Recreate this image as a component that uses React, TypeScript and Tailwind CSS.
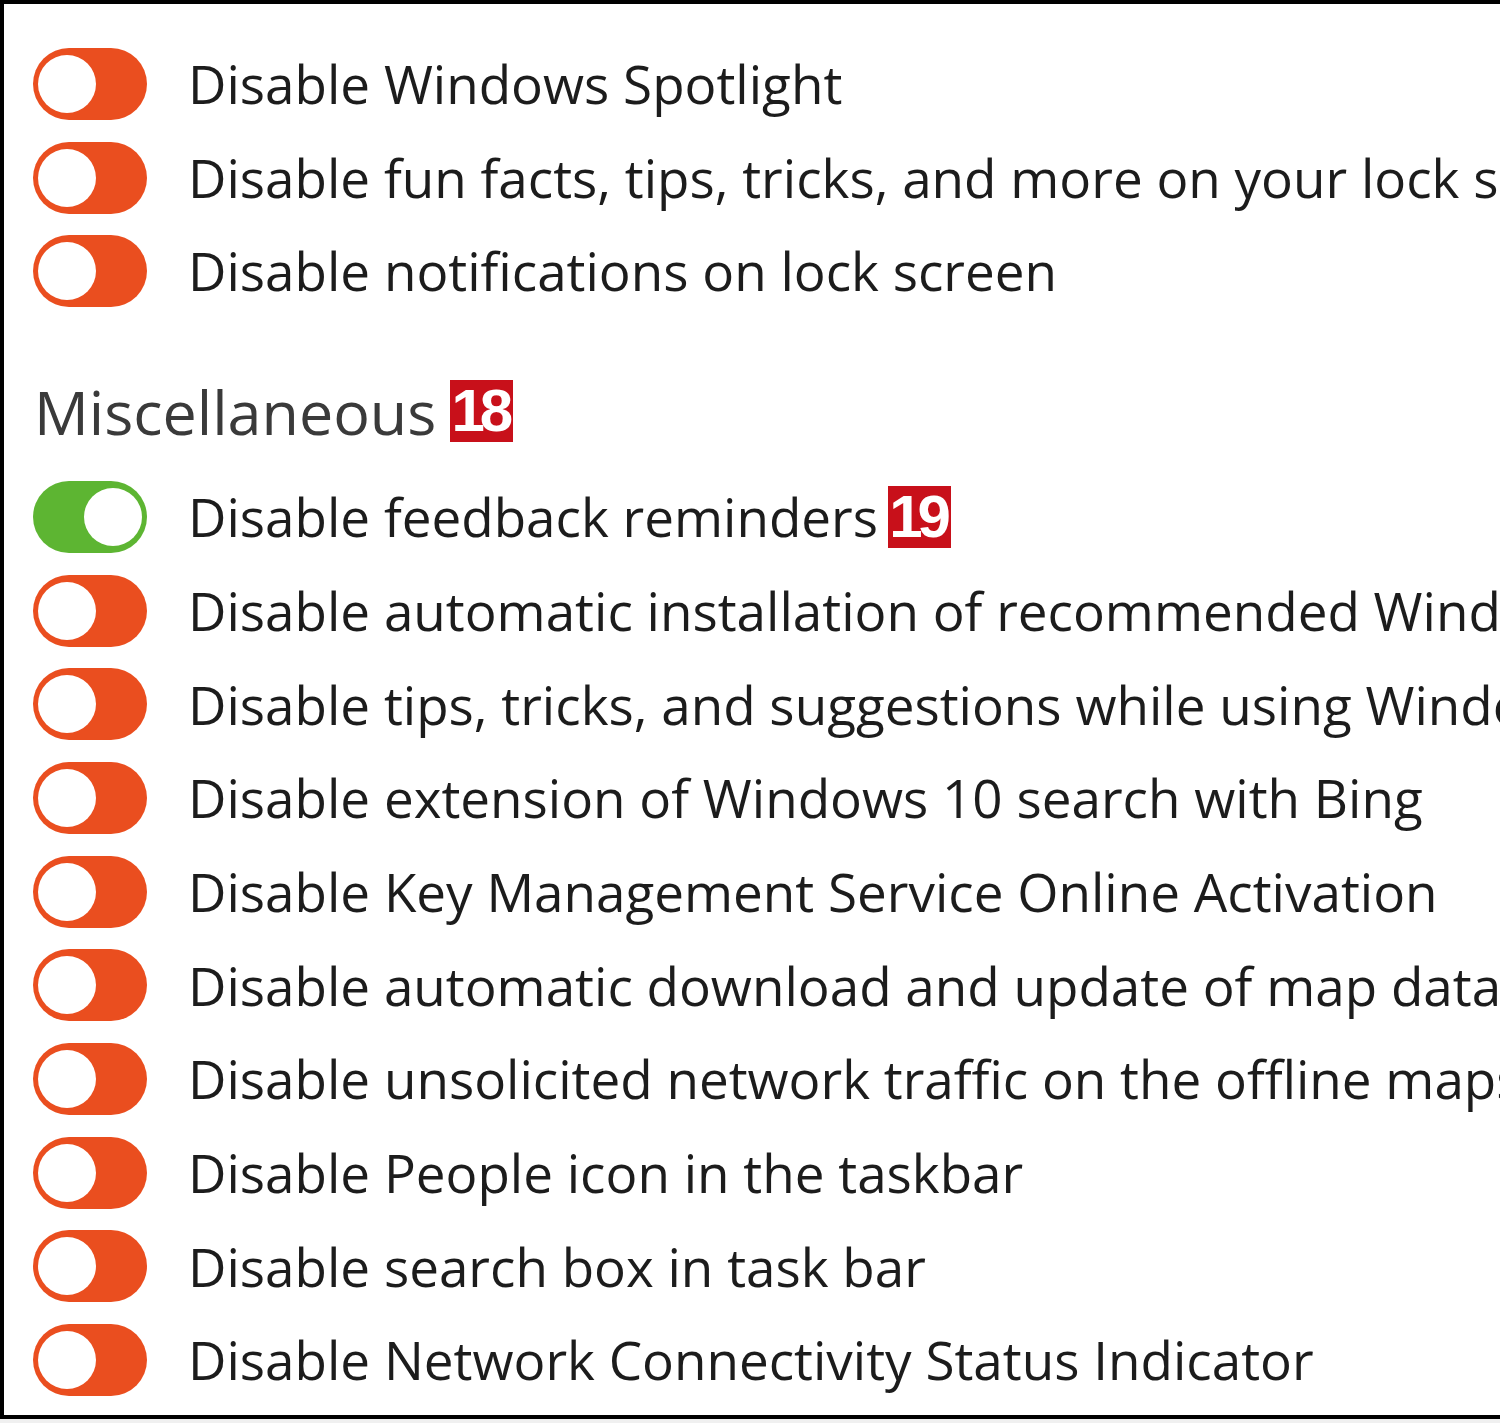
const lockRows = [
  "Disable Windows Spotlight",
  "Disable fun facts, tips, tricks, and more on your lock screen",
  "Disable notifications on lock screen",
];

const miscRows: { label: string; on?: boolean; badge?: string }[] = [
  { label: "Disable feedback reminders", on: true, badge: "19" },
  { label: "Disable automatic installation of recommended Windows Store Apps" },
  { label: "Disable tips, tricks, and suggestions while using Windows" },
  { label: "Disable extension of Windows 10 search with Bing" },
  { label: "Disable Key Management Service Online Activation" },
  { label: "Disable automatic download and update of map data" },
  { label: "Disable unsolicited network traffic on the offline maps settings page" },
  { label: "Disable People icon in the taskbar" },
  { label: "Disable search box in task bar" },
  { label: "Disable Network Connectivity Status Indicator" },
];

const Toggle = ({ on }: { on?: boolean }) => (
  <div
    className={
      on
        ? "w-[114px] h-[72px] rounded-full bg-[#5db532] flex items-center justify-end px-[5px] shrink-0"
        : "w-[114px] h-[72px] rounded-full bg-[#ea4e1f] flex items-center justify-start px-[5px] shrink-0"
    }
  >
    <div className="size-[58px] rounded-full bg-white" />
  </div>
);

const Badge = ({ n }: { n: string }) => (
  <span className="inline-flex items-center justify-center h-[62px] w-[63px] bg-[#c8101a] text-white font-bold text-[60px] leading-none tracking-[-5px] font-['Liberation_Sans',Arial,sans-serif]">
    <span className="-ml-[4px]">{n}</span>
  </span>
);

const Row = ({ label, on, badge }: { label: string; on?: boolean; badge?: string }) => (
  <div className="h-[93.7px] flex items-center pl-[29px]">
    <Toggle on={on} />
    <span className="ml-[41px] whitespace-nowrap text-[#1c1c1c]">{label}</span>
    {badge && <span className="ml-[10px]"><Badge n={badge} /></span>}
  </div>
);

export default function App() {
  return (
    <div className="w-[1500px] h-[1423px] bg-[#f0f0f0] overflow-hidden font-['Open_Sans','Noto_Sans',sans-serif] text-[53px]">
      <div className="h-[1419px] bg-white border-l-4 border-t-4 border-b-4 border-black pt-[33px] overflow-hidden">
        {lockRows.map((r) => (
          <Row key={r} label={r} />
        ))}
        <div className="mt-[62px] mb-[28px] h-[62px] flex items-center pl-[30px]">
          <span className="text-[#3a3a3a] text-[61px] leading-none">Miscellaneous</span>
          <span className="ml-[14px]"><Badge n="18" /></span>
        </div>
        {miscRows.map((r) => (
          <Row key={r.label} label={r.label} on={r.on} badge={r.badge} />
        ))}
      </div>
    </div>
  );
}
